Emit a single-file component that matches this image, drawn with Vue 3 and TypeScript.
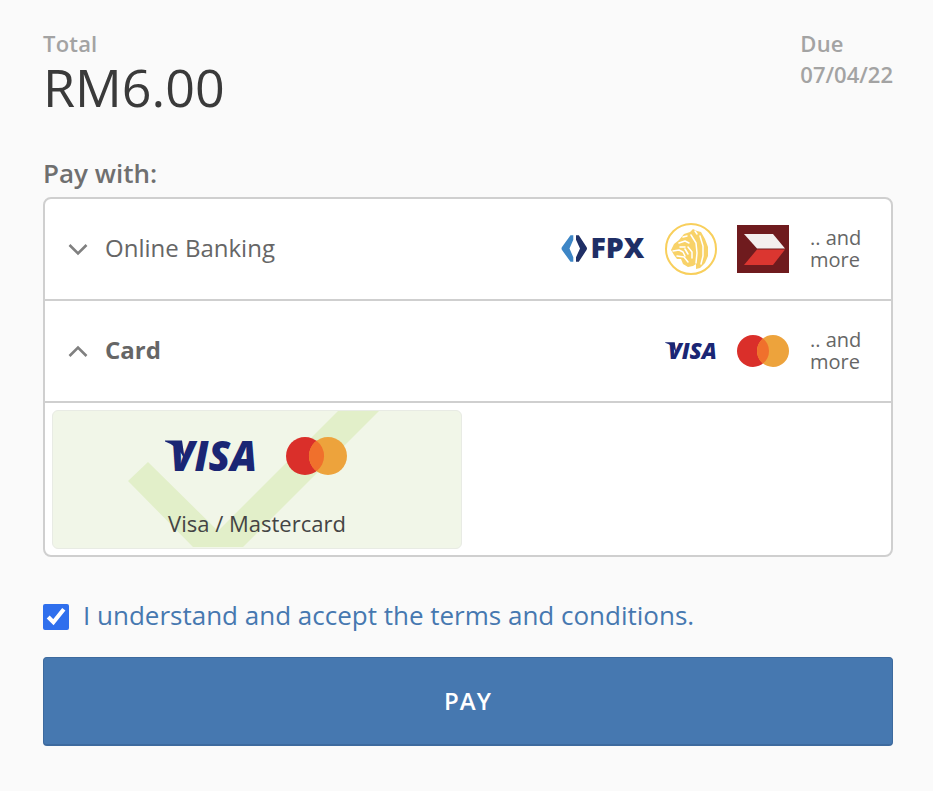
<script setup lang="ts">
import { ref } from 'vue'
const accepted = ref(true)
</script>

<template>
  <main class="page">
    <header class="summary">
      <div>
        <div class="label">Total</div>
        <div class="amount">RM6.00</div>
      </div>
      <div class="due">
        <div class="label">Due</div>
        <div class="date">07/04/22</div>
      </div>
    </header>

    <div class="pay-with">Pay with:</div>

    <section class="methods">
      <div class="method">
        <svg class="chev" viewBox="0 0 20 13"><path d="M1.500 2 10 10.500 18.500 2" /></svg>
        <span class="name">Online Banking</span>
        <div class="logos">
          <svg class="logo fpx-logo" width="88" height="32" viewBox="0 0 88 32">
            <path d="M9.500 2.200h2.800v4.500L8.500 15.500l3.800 8.800v4.500H9.500L1 17q-1-1.500 0-3z" fill="#3d86c6" />
            <path d="M15 2.200h2.800L25.500 14q1 1.500 0 3l-7.700 11.800H15v-4.500l4-8.800L15 6.700z" fill="#1f2f66" />
            <text x="29.500" y="25" class="fpx">FPX</text>
          </svg>
          <svg class="logo" width="52" height="52" viewBox="0 0 52 52">
            <circle cx="26" cy="26" r="25" fill="#fff" stroke="#f8cf5c" stroke-width="2" />
            <path d="M6 27 9 21l5-4 5-6 6-2 3-3 4 2 4 1 4 7 3 8 0 9-3 7-5 5-4 1 0-5-3 2-5 1-5-3-2-5-4 0-3-4z" fill="#f8d268" />
            <g fill="none" stroke="#fff" stroke-width="1.500" stroke-linecap="round" stroke-linejoin="round">
              <path d="M14 20l6-2 4 2" />
              <path d="M8 28l6-1 4 2 2 4" />
              <path d="M12 33l7 1 4 5" />
              <path d="M26 12l5 8 1 10-1 10" />
              <path d="M35 13l3 10 0 10-2 8" />
              <path d="M23 24l4 5 0 6" />
              <path d="M30 8l2 3" />
              <path d="M18 14l4-1" />
              <path d="M15 24h5" />
              <path d="M20 26l3 5" />
            </g>
          </svg>
          <svg class="logo" width="52" height="48" viewBox="0 0 52 48">
            <rect width="52" height="48" fill="#6f1b1e" />
            <path d="M7 9h29l12 14.500H20z" fill="#f3efee" />
            <path d="M20 24.500h28L36 40H7z" fill="#db3630" />
          </svg>
        </div>
        <span class="more">.. and more</span>
      </div>

      <div class="method">
        <svg class="chev" viewBox="0 0 20 13"><path d="M1.500 11 10 2.500 18.500 11" /></svg>
        <span class="name strong">Card</span>
        <div class="logos">
          <svg class="logo visa-small" width="56" height="18" viewBox="0 0 99 32">
            <path d="M0 .5h17l3 20Q14 6 0 1.500z" fill="#1a2674" />
            <text x="5" y="30.500" class="visa" textLength="87" lengthAdjust="spacingAndGlyphs">VISA</text>
          </svg>
          <svg class="logo" width="52" height="32" viewBox="0 0 52 32">
            <circle cx="16" cy="16" r="16" fill="#da2f2a" />
            <circle cx="36" cy="16" r="16" fill="#eda33c" />
            <path d="M26 3.500a16 16 0 0 1 0 25 16 16 0 0 1 0-25z" fill="#f0702c" />
          </svg>
        </div>
        <span class="more">.. and more</span>
      </div>

      <div class="options">
        <button class="option" type="button">
          <svg class="tick" width="408" height="137" viewBox="0 0 408 137">
            <path d="M75 70 95 51 165 120 285 0H326L190 136H140z" fill="#e2efc9" />
          </svg>
          <span class="option-logos">
            <svg class="logo" width="99" height="32" viewBox="0 0 99 32">
              <path d="M0 .5h17l3 20Q14 6 0 1.500z" fill="#1a2674" />
              <text x="5" y="30.500" class="visa" textLength="87" lengthAdjust="spacingAndGlyphs">VISA</text>
            </svg>
            <svg class="logo" width="61" height="38" viewBox="0 0 61 38">
              <circle cx="19" cy="19" r="19" fill="#da2f2a" />
              <circle cx="42" cy="19" r="19" fill="#eda33c" />
              <path d="M30.500 3.800a19 19 0 0 1 0 30.400 19 19 0 0 1 0-30.400z" fill="#f0702c" />
            </svg>
          </span>
          <span class="option-name">Visa / Mastercard</span>
        </button>
      </div>
    </section>

    <label class="terms">
      <input v-model="accepted" type="checkbox" />
      <span>I understand and accept the terms and conditions.</span>
    </label>

    <button class="pay" type="button">PAY</button>
  </main>
</template>

<style>
html, body { background: #fafafa; }
</style>

<style scoped>
.page {
  box-sizing: border-box;
  width: 933px;
  height: 791px;
  padding: 29px 40px 0 43px;
  background: #fafafa;
  font-family: "Open Sans", "Liberation Sans", sans-serif;
  color: #333;
}
.summary { display: flex; justify-content: space-between; height: 127px; }
.label { font-size: 22px; line-height: 29px; color: #a3a3a3; font-weight: 550; letter-spacing: 0.2px; }
.amount { font-size: 52px; line-height: 58px; color: #3a3a3a; }
.date { font-size: 22px; line-height: 32px; color: #a3a3a3; font-weight: 550; }
.pay-with { font-size: 26px; line-height: 34px; font-weight: 600; color: #6f6f6f; margin-bottom: 7px; }
.methods {
  border: 2px solid #cfcfcf;
  border-radius: 8px;
  background: #fff;
  overflow: hidden;
}
.method {
  display: flex;
  align-items: center;
  height: 100px;
  border-bottom: 2px solid #cfcfcf;
  padding: 0 29px 0 23px;
  color: #666;
}
.chev { flex: none; width: 20px; height: 13px; fill: none; stroke: #808080; stroke-width: 2.6; margin-right: 17px; }
.name { font-size: 24px; margin-bottom: 3px; }
.strong { font-weight: 700; }
.logos { display: flex; align-items: center; gap: 20px; margin-left: auto; }
.logo { display: block; overflow: visible; }
.fpx-logo { margin-right: -4px; }
.visa-small { margin-right: -4px; }
.fpx { font: 800 28.500px "Open Sans", sans-serif; fill: #1f2f66; }
.visa { font: italic 800 42px "Open Sans", sans-serif; fill: #1a2674; }
.more { width: 52px; margin-left: 21px; font-size: 20px; line-height: 22px; color: #666; }
.options { display: flex; padding: 7px 6px 6px 7px; }
.option {
  position: relative;
  display: flex;
  flex-direction: column;
  align-items: center;
  box-sizing: border-box;
  width: 410px;
  height: 139px;
  padding: 25px 0 0;
  border: 1px solid #e8ebe4;
  border-radius: 6px;
  background: #f1f6e8;
  font-family: inherit;
  overflow: hidden;
}
.tick { position: absolute; left: 0; top: 0; }
.option-logos { position: relative; display: flex; align-items: center; gap: 22px; height: 40px; padding-right: 2px; }
.option-name { position: relative; margin-top: 32px; font-size: 22px; line-height: 30px; color: #444; }
.terms { display: flex; align-items: flex-start; gap: 14px; margin-top: 42px; color: #4678b0; font-size: 26px; line-height: 32px; }
.terms input { width: 26px; height: 26px; margin: 5px 0 0; accent-color: #2f6fed; }
.pay {
  display: block;
  width: 100%;
  height: 89px;
  margin-top: 26px;
  padding: 0 0 2px;
  border: 1px solid #3d6a9e;
  border-bottom-width: 2px;
  border-radius: 4px;
  background: #4678b0;
  color: #fff;
  font-family: inherit;
  font-size: 24px;
  font-weight: 600;
  letter-spacing: 1px;
}
</style>
